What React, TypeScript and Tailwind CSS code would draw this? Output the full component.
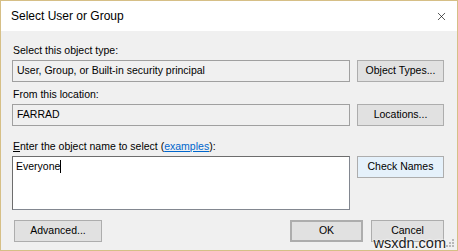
import { X } from 'lucide-react';

const font = { fontFamily: '"Liberation Sans", Arial, sans-serif' };

const Btn = ({ label, className = '' }: { label: string; className?: string }) => (
  <div
    className={`flex items-center justify-center h-[22px] border border-[#adadad] bg-[#e1e1e1] text-[10.5px] text-black ${className}`}
  >
    {label}
  </div>
);

export default function App() {
  return (
    <div
      className="relative w-[458px] h-[251px] border border-[#d6bf86] bg-[#f0f0f0] flex flex-col overflow-hidden"
      style={font}
    >
      {/* title bar */}
      <div className="h-[30px] bg-white flex items-center justify-between pl-[10px] pr-[9px] shrink-0">
        <span className="text-[12px] text-black">Select User or Group</span>
        <X className="w-[13px] h-[13px] text-black" strokeWidth={1.2} />
      </div>

      <div className="flex flex-col pl-[11px] pr-[13px] text-[10.5px] text-black">
        <div className="mt-[12px] leading-[15px] pl-[1px]">Select this object type:</div>
        <div className="mt-[2px] flex gap-[7px]">
          <div className="flex-1 h-[22px] border border-[#a0a0a0] bg-[#f0f0f0] flex items-center px-[4px]">
            User, Group, or Built-in security principal
          </div>
          <Btn label="Object Types..." className="w-[87px]" />
        </div>

        <div className="mt-[5px] leading-[15px] pl-[1px]">From this location:</div>
        <div className="mt-[2px] flex gap-[7px]">
          <div className="flex-1 h-[22px] border border-[#a0a0a0] bg-[#f0f0f0] flex items-center px-[4px]">
            FARRAD
          </div>
          <Btn label="Locations..." className="w-[87px]" />
        </div>

        <div className="mt-[13px] leading-[15px] pl-[1px]">
          <span className="underline">E</span>nter the object name to select (
          <span className="text-[#0066cc] underline">examples</span>):
        </div>
        <div className="mt-[2px] flex gap-[7px] items-start">
          <div className="flex-1 h-[54px] border border-[#828790] border-l-[#6d6d6d] border-t-[#6d6d6d] bg-white px-[3px] pt-[3px] leading-[13px]">
            <span>Everyone</span>
            <span className="inline-block w-[1px] h-[13px] bg-black align-[-3px]" />
          </div>
          <Btn label="Check Names" className="w-[87px] bg-[#e5f1fb] border-[#0078d7]" />
        </div>

        <div className="mt-[10px] flex items-center">
          <Btn label="Advanced..." className="w-[88px] ml-[2px]" />
          <div className="flex-1" />
          <Btn label="OK" className="w-[73px] border-2 border-[#0078d7]" />
          <Btn label="Cancel" className="w-[73px] ml-[8px]" />
        </div>
      </div>

      {/* watermark overlay */}
      <div
        className="absolute right-[11px] bottom-[0px] text-[14.5px] leading-[14px] text-[#222]"
        style={{ fontFamily: '"Liberation Sans", sans-serif', textShadow: '0 0 2px #fff, 0 0 2px #fff' }}
      >
        wsxdn.com
      </div>
      <div className="absolute right-[3px] bottom-[3px] grid grid-cols-3 gap-[1px]">
        {[0, 1, 2, 3, 4, 5, 6, 7, 8].map((i) => (
          <span
            key={i}
            className={`w-[2px] h-[2px] ${[2, 4, 5, 6, 7, 8].includes(i) ? 'bg-[#b8b8b8]' : 'bg-transparent'}`}
          />
        ))}
      </div>
    </div>
  );
}
